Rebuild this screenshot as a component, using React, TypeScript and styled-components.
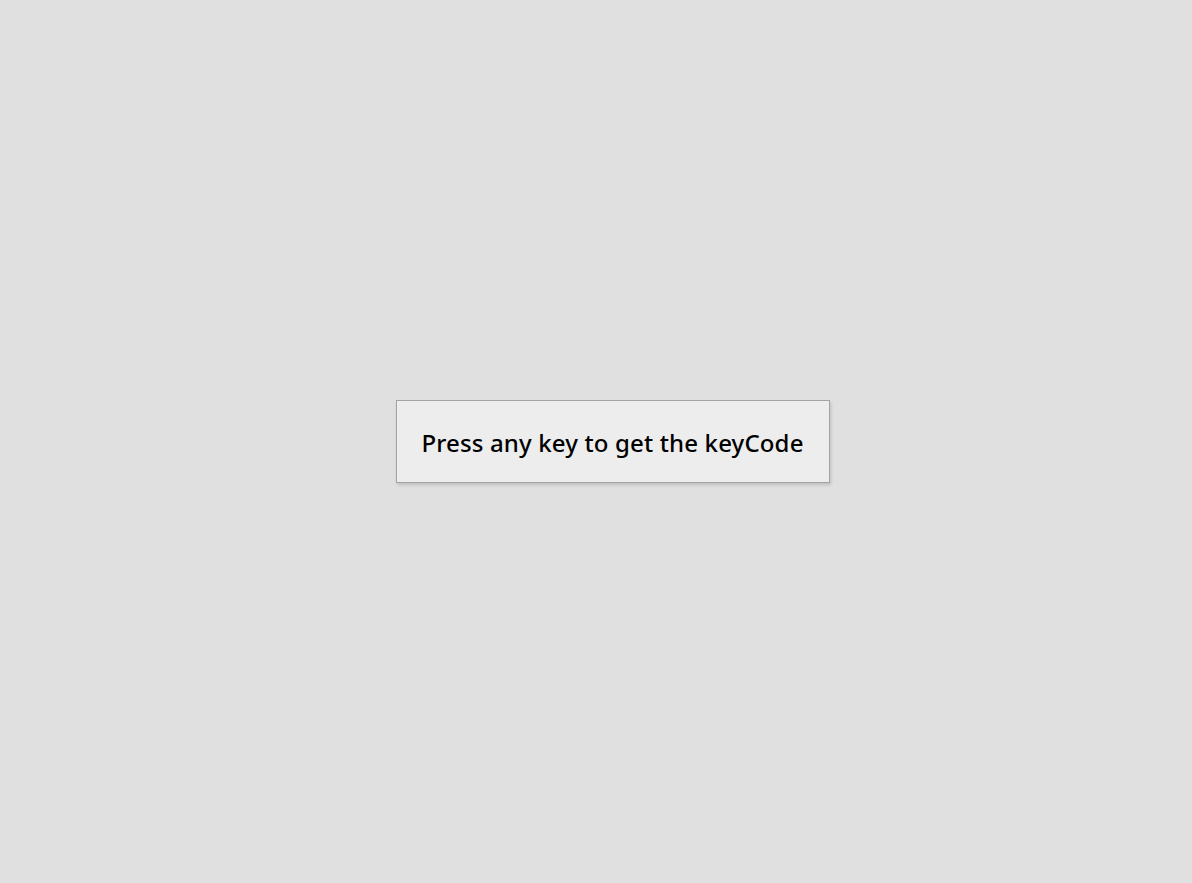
import React from "react";
import styled, { createGlobalStyle } from "styled-components";

const Global = createGlobalStyle`
  html, body { margin: 0; padding: 0; }
  body {
    background: #e0e0e0;
    font-family: "Noto Sans", "Open Sans", sans-serif;
  }
`;

const Page = styled.main`
  min-height: 883px;
  display: flex;
  align-items: center;
  justify-content: center;
  padding-left: 33px;
  box-sizing: border-box;
`;

const KeyBox = styled.div`
  width: 434px;
  height: 83px;
  box-sizing: border-box;
  display: flex;
  align-items: center;
  justify-content: center;
  padding-top: 2px;
  background: #ededed;
  border: 1px solid #a3a3a3;
  box-shadow: 1px 2px 3px rgba(0, 0, 0, 0.15);
  color: #000;
  font-size: 24px;
  font-weight: 500;
  letter-spacing: 0.15px;
`;

export default function App() {
  return (
    <>
      <Global />
      <Page>
        <KeyBox>Press any key to get the keyCode</KeyBox>
      </Page>
    </>
  );
}
